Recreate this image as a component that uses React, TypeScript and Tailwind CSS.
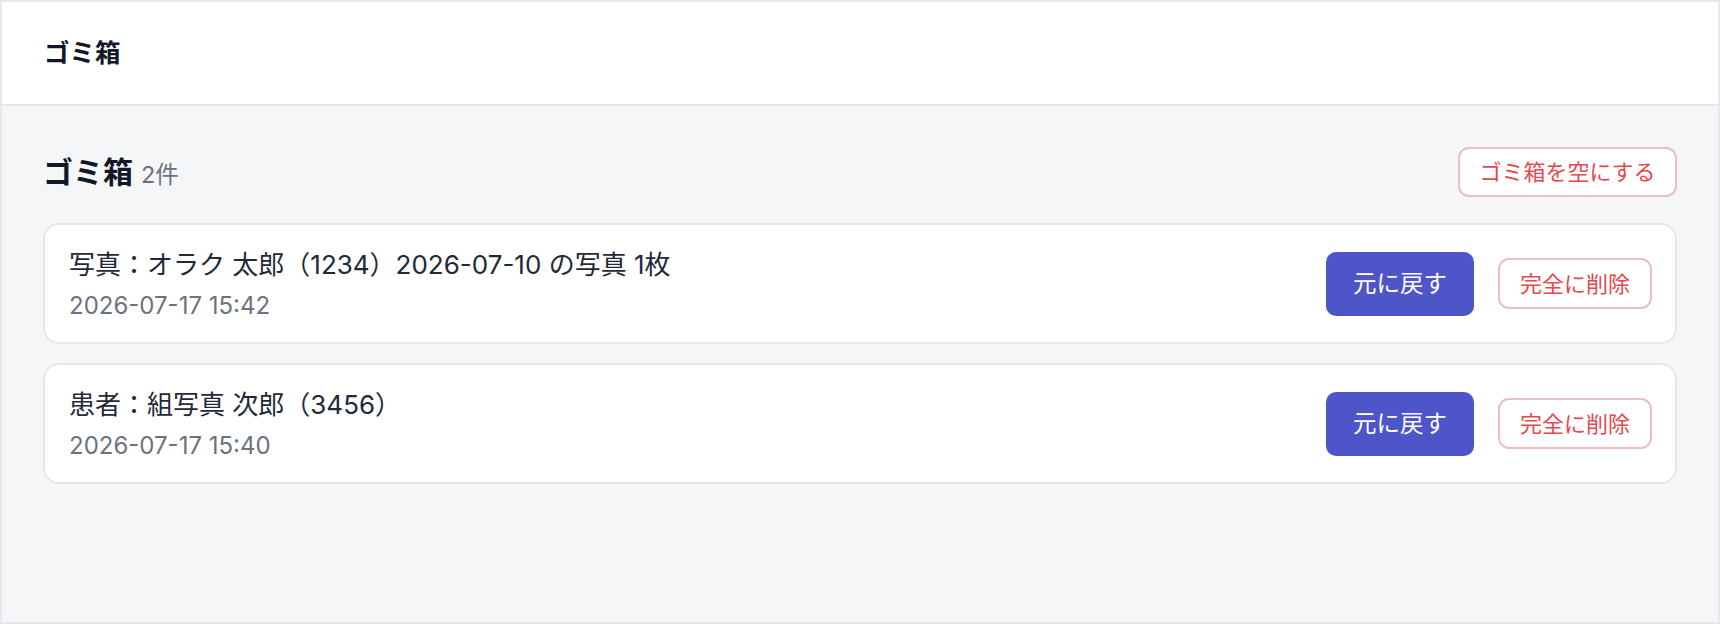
import React from "react";

const items = [
  { title: "写真：オラク 太郎（1234）2026-07-10 の写真 1枚", time: "2026-07-17 15:42" },
  { title: "患者：組写真 次郎（3456）", time: "2026-07-17 15:40" },
];

export default function App() {
  return (
    <div
      className="w-full h-[624px] border-2 border-[#e5e7eb] flex flex-col bg-[#f5f6f8]"
      style={{ fontFamily: "Inter, 'Noto Sans CJK JP', sans-serif" }}
    >
      <header className="h-[104px] shrink-0 bg-white border-b-2 border-[#e5e7eb] flex items-center px-[42px]">
        <h1 className="text-[25.5px] font-bold text-[#111827] leading-none">ゴミ箱</h1>
      </header>
      <main className="flex-1 px-[41px] pt-[41px]">
        <div className="flex items-center justify-between h-[50px]">
          <div className="flex items-baseline gap-[8px]">
            <h2 className="text-[30px] font-bold text-[#111827] leading-none">ゴミ箱</h2>
            <span className="text-[23.5px] text-[#6b7280] leading-none">2件</span>
          </div>
          <button className="w-[219px] h-[50px] rounded-[11px] border-2 border-[#ecbec1] bg-white text-[22px] text-[#e5484d] leading-none">
            ゴミ箱を空にする
          </button>
        </div>
        <div className="mt-[26px] flex flex-col gap-[19px]">
          {items.map((it) => (
            <div
              key={it.time}
              className="h-[121px] rounded-[16px] border-2 border-[#e5e7eb] bg-white flex items-center justify-between pl-[24px] pr-[23px]"
            >
              <div className="flex flex-col">
                <div className="text-[26px] leading-[36px] text-[#1f2937]">{it.title}</div>
                <div className="mt-[8px] text-[24px] leading-[30px] text-[#6b7280]">{it.time}</div>
              </div>
              <div className="flex items-center gap-[24px]">
                <button className="w-[148px] h-[64px] rounded-[10px] bg-[#4e55c8] text-white text-[23.5px] leading-none">
                  元に戻す
                </button>
                <button className="w-[154px] h-[51px] rounded-[11px] border-2 border-[#ecbec1] bg-white text-[22px] text-[#e5484d] leading-none">
                  完全に削除
                </button>
              </div>
            </div>
          ))}
        </div>
      </main>
    </div>
  );
}
